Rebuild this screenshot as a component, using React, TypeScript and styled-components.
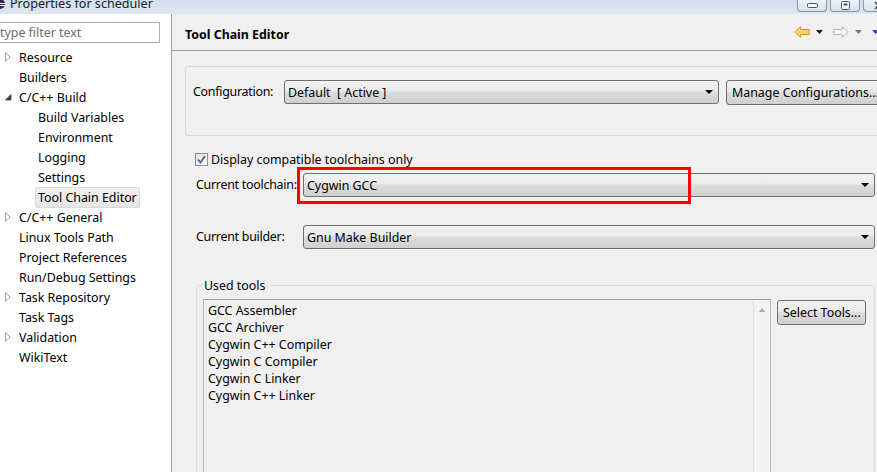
import React from 'react'
import styled, { createGlobalStyle } from 'styled-components'

const GlobalStyle = createGlobalStyle`
    html, body {
        margin: 0;
        padding: 0;
        overflow: hidden;
    }
    body {
        font-family: "Noto Sans", "Liberation Sans", sans-serif;
        font-size: 12.4px;
        color: #000000;
    }
`

/* window frame */
const Window = styled.div`
    width: 877px;
    height: 472px;
    overflow: hidden;
    display: flex;
    flex-direction: column;
    background: #f0f0f0;
`

const TitleBar = styled.div`
    height: 14px;
    flex: none;
    display: flex;
    align-items: flex-start;
    justify-content: space-between;
    background: linear-gradient(#d3dfee, #dde7f3);
    overflow: hidden;
`

const TitleText = styled.div`
    display: flex;
    align-items: flex-start;
    gap: 5px;
    margin-left: -5px;
    font-size: 12.6px;
    line-height: 14px;
    color: #1b1b1b;

    span {
        margin-top: -3px;
    }
`

const WindowButtons = styled.div`
    display: flex;
    gap: 3px;
    margin-right: -16px;
`

const WindowButton = styled.div`
    width: 30px;
    height: 12px;
    box-sizing: border-box;
    border: 1px solid #8696ab;
    border-top: none;
    border-radius: 0 0 4px 4px;
    background: linear-gradient(#eef3f9, #d7e1ee);
    display: flex;
    align-items: center;
    justify-content: center;
`

const Body = styled.div`
    flex: 1;
    min-height: 0;
    display: flex;
`

/* left tree */
const LeftPane = styled.div`
    width: 171px;
    flex: none;
    background: #ffffff;
    border-right: 1px solid #a0a0a0;
    overflow: hidden;
`

const FilterInput = styled.input`
    display: block;
    margin: 8px 0 0 -6px;
    width: 166px;
    height: 21px;
    box-sizing: border-box;
    border: 1px solid #abadb3;
    padding: 0 0 0 5px;
    font-family: inherit;
    font-size: 12.4px;
    background: #ffffff;
    outline: none;

    &::placeholder {
        color: #6d6d6d;
    }
`

const Tree = styled.div`
    margin-top: 4px;
`

const TreeRow = styled.div<{ level: number }>`
    height: 20px;
    display: flex;
    align-items: center;
    padding-left: ${({ level }) => (level - 1) * 19}px;
    white-space: nowrap;
`

const Twisty = styled.div`
    width: 19px;
    height: 20px;
    flex: none;
    display: flex;
    align-items: center;
    padding-left: 5px;
    box-sizing: border-box;
`

const TreeLabel = styled.div<{ selected?: boolean }>`
    line-height: 17px;
    padding: 1px 2px;
    margin-left: -3px;
    border: 1px solid ${({ selected }) => selected ? '#d9d9d9' : 'transparent'};
    border-radius: 2px;
    background: ${({ selected }) => selected ? 'linear-gradient(#f2f2f2, #e5e5e5)' : 'transparent'};
`

/* right page */
const RightPane = styled.div`
    flex: 1;
    min-width: 0;
    display: flex;
    flex-direction: column;
    overflow: hidden;
`

const Header = styled.div`
    height: 36px;
    flex: none;
    display: flex;
    align-items: center;
    justify-content: space-between;
    padding-left: 13px;
    border-bottom: 1px solid #a0a0a0;
`

const PageTitle = styled.div`
    font-weight: 700;
    margin-top: 4px;
`

const NavBar = styled.div`
    display: flex;
    gap: 10px;
    margin-right: -2px;
`

const NavPair = styled.div`
    display: flex;
    align-items: center;
    gap: 6px;
`

const Page = styled.div`
    display: flex;
    flex-direction: column;
`

const ConfigGroup = styled.div`
    margin: 15px 0 0 13px;
    width: 720px;
    height: 70px;
    box-sizing: border-box;
    border: 1px solid #d6dbe0;
    border-radius: 3px;
    padding: 13px 0 0 7px;
    display: flex;
    gap: 7px;
    align-items: flex-start;
    align-self: flex-start;
`

const Section = styled.div`
    margin-left: 24px;
    width: 679px;
    display: flex;
    flex-direction: column;
`

const FieldLabel = styled.div<{ width: number }>`
    width: ${({ width }) => width}px;
    height: 24px;
    line-height: 24px;
    flex: none;
    white-space: nowrap;
    letter-spacing: -0.25px;
`

const Combo = styled.div<{ width: number }>`
    position: relative;
    width: ${({ width }) => width}px;
    height: 24px;
    flex: none;
    box-sizing: border-box;
    border: 1px solid #707070;
    border-radius: 3px;
    background: linear-gradient(#f2f2f2 0%, #ebebeb 45%, #dddddd 50%, #cfcfcf 100%);
    display: flex;
    align-items: center;
    justify-content: space-between;
    padding: 0 5px 0 3px;
    white-space: pre;
`

const Arrow = styled.div`
    width: 0;
    height: 0;
    border-left: 4px solid transparent;
    border-right: 4px solid transparent;
    border-top: 4px solid #000000;
`

const Button = styled.div<{ width: number }>`
    width: ${({ width }) => width}px;
    height: 25px;
    flex: none;
    box-sizing: border-box;
    border: 1px solid #707070;
    border-radius: 3px;
    background: linear-gradient(#f2f2f2 0%, #ebebeb 45%, #dddddd 50%, #cfcfcf 100%);
    display: flex;
    align-items: center;
    padding-left: 5px;
    white-space: nowrap;
`

const CheckRow = styled.div`
    margin-top: 15px;
    height: 16px;
    display: flex;
    align-items: center;
    gap: 3px;
    margin-left: -1px;
`

const CheckBox = styled.div`
    width: 13px;
    height: 13px;
    box-sizing: border-box;
    border: 1px solid #8e8f8f;
    background: linear-gradient(135deg, #dedede, #ffffff);
    display: flex;
    align-items: center;
    justify-content: center;
`

const FieldRow = styled.div<{ top: number }>`
    position: relative;
    margin-top: ${({ top }) => top}px;
    display: flex;
    align-items: center;
`

const Highlight = styled.div`
    position: absolute;
    z-index: 2;
    left: 101px;
    top: -6px;
    width: 394px;
    height: 37px;
    box-sizing: border-box;
    border: 3px solid #ff0000;
    pointer-events: none;
`

const ToolsGroup = styled.fieldset`
    margin: 28px 0 0 0;
    height: 260px;
    box-sizing: border-box;
    border: 1px solid #d5dfe5;
    border-radius: 3px;
    padding: 5px 0 0 6px;
    display: flex;
    gap: 6px;
    align-items: flex-start;
    min-width: 0;

    legend {
        padding: 0 1px;
        line-height: 17px;
    }
`

const ToolsList = styled.div`
    width: 568px;
    height: 200px;
    flex: none;
    box-sizing: border-box;
    border: 1px solid #b9bcc0;
    border-top-color: #9c9c9c;
    display: flex;
`

const ToolsItems = styled.div`
    flex: 1;
    padding: 2px 0 0 4px;
`

const ToolItem = styled.div`
    line-height: 17px;
    white-space: nowrap;
`

const ScrollBar = styled.div`
    width: 17px;
    flex: none;
    box-sizing: border-box;
    border-left: 1px solid #e0e0e0;
    border-right: 1px solid #fafafa;
    background: #f3f3f3;
    display: flex;
    justify-content: center;
    padding-top: 8px;
`

const UpArrow = styled.div`
    width: 0;
    height: 0;
    border-left: 3px solid transparent;
    border-right: 3px solid transparent;
    border-bottom: 4px solid #a8a8a8;
`

const ToolsButton = styled(Button)`
    margin-top: 1px;
`

/* drawings */
const EclipseIcon = () => (
    <svg width="10" height="10" viewBox="0 0 10 10">
        <circle cx="5" cy="4" r="5" fill="#2c2255" />
        <rect x="0" y="3" width="10" height="1" fill="#ffffff" />
        <rect x="0" y="5" width="10" height="1" fill="#ffffff" />
    </svg>
)

const Collapsed = () => (
    <svg width="6" height="10" viewBox="0 0 6 10">
        <path d="M0.5 0.5 L5 5 L0.5 9.5 Z" fill="#ffffff" stroke="#a6a6a6" />
    </svg>
)

const Expanded = () => (
    <svg width="7" height="7" viewBox="0 0 7 7">
        <path d="M6 0.5 L6 6 L0.5 6 Z" fill="#404040" stroke="#404040" strokeWidth="0.8" />
    </svg>
)

const NavArrow = ({ dir, fill, stroke }: { dir: 'left' | 'right', fill: string, stroke: string }) => (
    <svg width="16" height="12" viewBox="0 0 16 12" style={{ transform: dir === 'right' ? 'scaleX(-1)' : undefined }}>
        <path d="M0.7 6 L6.5 0.7 L6.5 3.5 L15.3 3.5 L15.3 8.5 L6.5 8.5 L6.5 11.3 Z" fill={fill} stroke={stroke} strokeLinejoin="round" />
    </svg>
)

const SmallTri = ({ color }: { color: string }) => (
    <svg width="7" height="4" viewBox="0 0 7 4">
        <path d="M0 0 L7 0 L3.5 4 Z" fill={color} />
    </svg>
)

const treeData = [
    { text: 'Resource', level: 1, twisty: 'collapsed' },
    { text: 'Builders', level: 1 },
    { text: 'C/C++ Build', level: 1, twisty: 'expanded' },
    { text: 'Build Variables', level: 2 },
    { text: 'Environment', level: 2 },
    { text: 'Logging', level: 2 },
    { text: 'Settings', level: 2 },
    { text: 'Tool Chain Editor', level: 2, selected: true },
    { text: 'C/C++ General', level: 1, twisty: 'collapsed' },
    { text: 'Linux Tools Path', level: 1 },
    { text: 'Project References', level: 1 },
    { text: 'Run/Debug Settings', level: 1 },
    { text: 'Task Repository', level: 1, twisty: 'collapsed' },
    { text: 'Task Tags', level: 1 },
    { text: 'Validation', level: 1, twisty: 'collapsed' },
    { text: 'WikiText', level: 1 },
]

const tools = [
    'GCC Assembler',
    'GCC Archiver',
    'Cygwin C++ Compiler',
    'Cygwin C Compiler',
    'Cygwin C Linker',
    'Cygwin C++ Linker',
]

export default function App() {
    return (
        <Window>
            <GlobalStyle />
            <TitleBar>
                <TitleText>
                    <EclipseIcon />
                    <span>Properties for scheduler</span>
                </TitleText>
                <WindowButtons>
                    <WindowButton>
                        <svg width="11" height="5" viewBox="0 0 11 5">
                            <rect x="0.5" y="0.5" width="10" height="4" rx="1" fill="#f4f4f4" stroke="#4a5566" />
                        </svg>
                    </WindowButton>
                    <WindowButton>
                        <svg width="9" height="9" viewBox="0 0 9 9">
                            <rect x="0.5" y="0.5" width="8" height="8" rx="1" fill="#f4f4f4" stroke="#4a5566" />
                            <rect x="2.5" y="2.5" width="4" height="2" fill="#4a5566" />
                        </svg>
                    </WindowButton>
                    <WindowButton>
                        <svg width="9" height="9" viewBox="0 0 9 9">
                            <path d="M1 1 L8 8 M8 1 L1 8" stroke="#4a5566" strokeWidth="1.6" />
                        </svg>
                    </WindowButton>
                </WindowButtons>
            </TitleBar>

            <Body>
                <LeftPane>
                    <FilterInput placeholder="type filter text" />
                    <Tree>
                        { treeData.map((item, index) => (
                            <TreeRow level={item.level} key={`tree ${index}`}>
                                <Twisty>
                                    { item.twisty === 'collapsed' && <Collapsed /> }
                                    { item.twisty === 'expanded' && <Expanded /> }
                                </Twisty>
                                <TreeLabel selected={item.selected}>{ item.text }</TreeLabel>
                            </TreeRow>
                        )) }
                    </Tree>
                </LeftPane>

                <RightPane>
                    <Header>
                        <PageTitle>Tool Chain Editor</PageTitle>
                        <NavBar>
                            <NavPair>
                                <NavArrow dir="left" fill="#fcd46a" stroke="#d49a1e" />
                                <SmallTri color="#1a1a1a" />
                            </NavPair>
                            <NavPair>
                                <NavArrow dir="right" fill="#f7f7f7" stroke="#b9b9b9" />
                                <SmallTri color="#7a7a7a" />
                            </NavPair>
                            <NavPair>
                                <SmallTri color="#5b3a9a" />
                            </NavPair>
                        </NavBar>
                    </Header>

                    <Page>
                        <ConfigGroup>
                            <FieldLabel width={84}>Configuration:</FieldLabel>
                            <Combo width={435}>
                                <span>Default  [ Active ]</span>
                                <Arrow />
                            </Combo>
                            <Button width={170}>Manage Configurations...</Button>
                        </ConfigGroup>

                        <Section>
                            <CheckRow>
                                <CheckBox>
                                    <svg width="9" height="9" viewBox="0 0 9 9">
                                        <path d="M1 4.5 L3.5 7.5 L8 1" fill="none" stroke="#4b5f8f" strokeWidth="1.8" />
                                    </svg>
                                </CheckBox>
                                <span>Display compatible toolchains only</span>
                            </CheckRow>

                            <FieldRow top={6}>
                                <FieldLabel width={107}>Current toolchain:</FieldLabel>
                                <Combo width={572}>
                                    <span>Cygwin GCC</span>
                                    <Arrow />
                                </Combo>
                                <Highlight />
                            </FieldRow>

                            <FieldRow top={28}>
                                <FieldLabel width={107}>Current builder:</FieldLabel>
                                <Combo width={572}>
                                    <span>Gnu Make Builder</span>
                                    <Arrow />
                                </Combo>
                            </FieldRow>

                            <ToolsGroup>
                                <legend>Used tools</legend>
                                <ToolsList>
                                    <ToolsItems>
                                        { tools.map((tool, index) => (
                                            <ToolItem key={`tool ${index}`}>{ tool }</ToolItem>
                                        )) }
                                    </ToolsItems>
                                    <ScrollBar>
                                        <UpArrow />
                                    </ScrollBar>
                                </ToolsList>
                                <ToolsButton width={89}>Select Tools...</ToolsButton>
                            </ToolsGroup>
                        </Section>
                    </Page>
                </RightPane>
            </Body>
        </Window>
    )
}
